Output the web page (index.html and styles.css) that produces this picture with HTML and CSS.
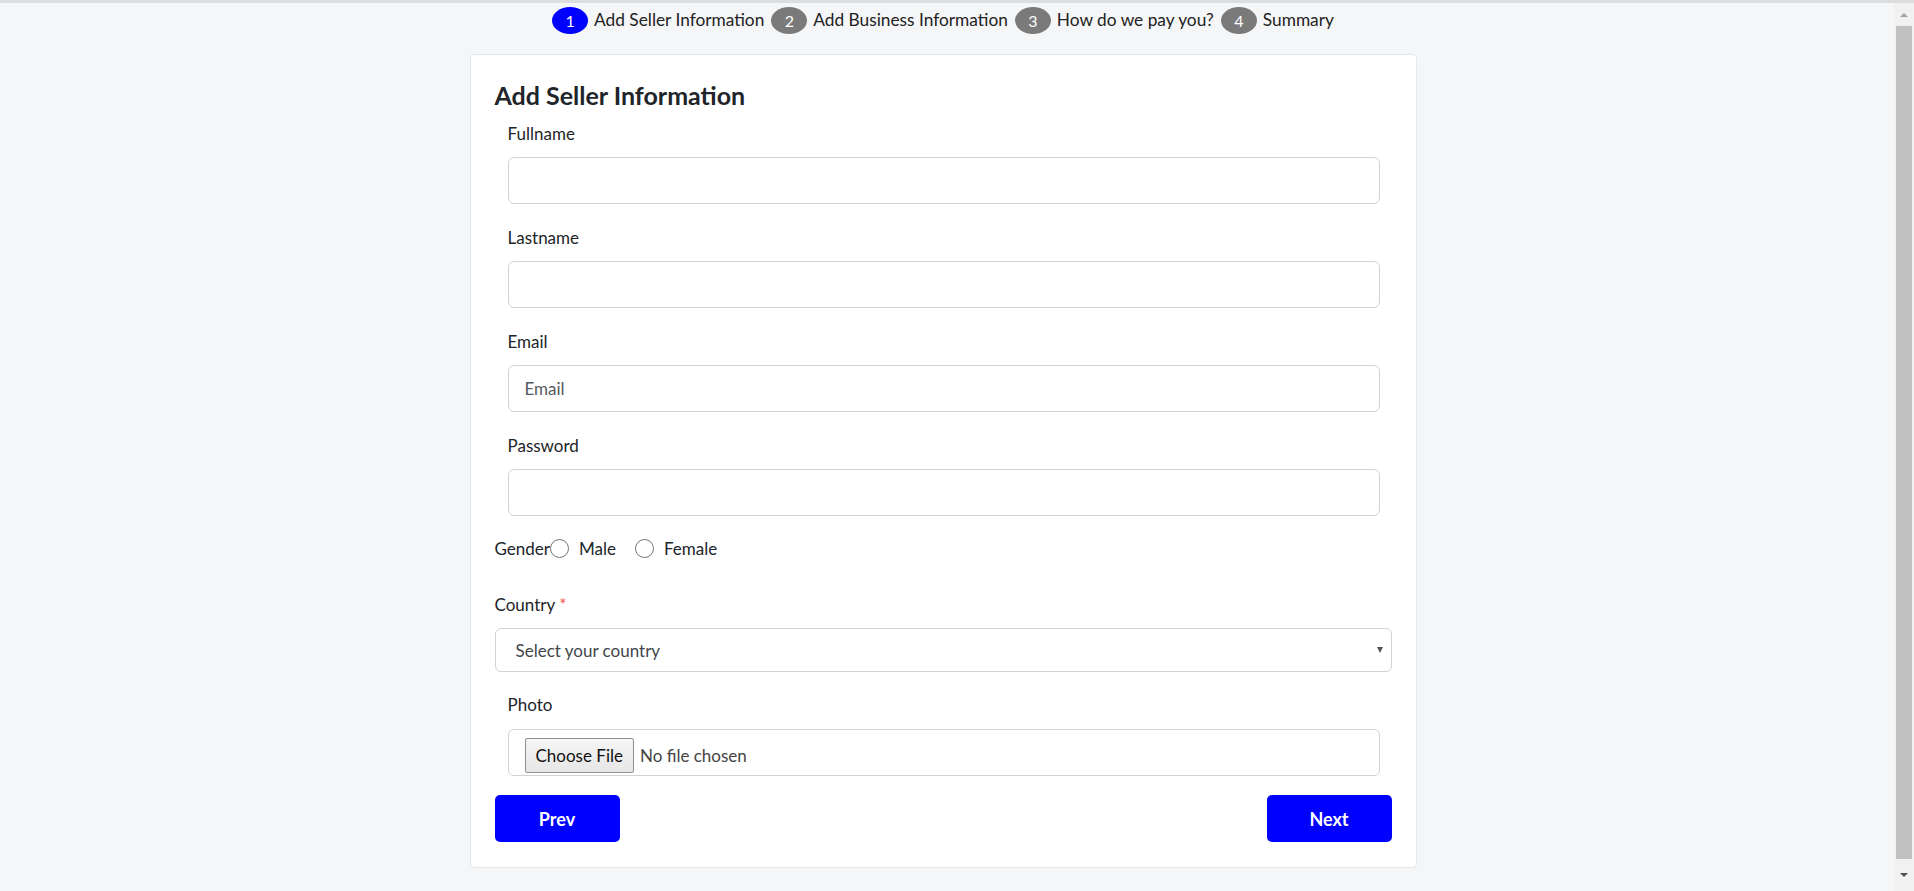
FILE: index.html
```html
<!DOCTYPE html>
<html lang="en">
<head>
<meta charset="utf-8">
<title>Add Seller Information</title>
<link rel="stylesheet" href="styles.css">
</head>
<body>
<div class="topline"></div>
<div class="frame">
  <main class="main">
    <nav class="stepper">
      <span class="step-num active">1</span><span class="step-text">Add Seller Information</span>
      <span class="step-num">2</span><span class="step-text">Add Business Information</span>
      <span class="step-num">3</span><span class="step-text">How do we pay you?</span>
      <span class="step-num">4</span><span class="step-text last">Summary</span>
    </nav>
    <form class="card">
      <h2 class="card-title">Add Seller Information</h2>
      <div class="field">
        <label class="label" for="fullname">Fullname</label>
        <input class="input" id="fullname" type="text">
      </div>
      <div class="field">
        <label class="label" for="lastname">Lastname</label>
        <input class="input" id="lastname" type="text">
      </div>
      <div class="field">
        <label class="label" for="email">Email</label>
        <input class="input" id="email" type="email" placeholder="Email">
      </div>
      <div class="field">
        <label class="label" for="password">Password</label>
        <input class="input" id="password" type="password">
      </div>
      <div class="gender-row">
        <span class="gender-title">Gender</span>
        <label class="radio-opt"><input class="radio" type="radio" name="gender"><span class="radio-text">Male</span></label>
        <label class="radio-opt second"><input class="radio" type="radio" name="gender"><span class="radio-text">Female</span></label>
      </div>
      <label class="label country-label" for="country">Country <span class="req">*</span></label>
      <div class="select-wrap">
        <select class="select" id="country">
          <option>Select your country</option>
        </select>
      </div>
      <div class="field photo-field">
        <label class="label photo-label" for="photo">Photo</label>
        <div class="file-box">
          <input class="file" id="photo" type="file">
        </div>
      </div>
      <div class="actions">
        <button class="btn" type="button">Prev</button>
        <button class="btn" type="button">Next</button>
      </div>
    </form>
  </main>
  <div class="scrollbar">
    <div class="sb-btn sb-up"><span class="arrow-up"></span></div>
    <div class="sb-thumb"></div>
    <div class="sb-btn sb-down"><span class="arrow-down"></span></div>
  </div>
</div>
</body>
</html>
```
FILE: styles.css
```css
html, body {
  margin: 0;
  padding: 0;
  height: 100%;
  overflow: hidden;
}
body {
  display: flex;
  flex-direction: column;
  background: #f5f6f8;
  font-family: Lato, "Open Sans", sans-serif;
  color: #212529;
}
.topline {
  height: 3px;
  background: #dcdddf;
  flex: none;
}
.frame {
  flex: 1;
  display: flex;
  min-height: 0;
}
.main {
  flex: 1;
  display: flex;
  flex-direction: column;
  align-items: center;
  padding-right: 8px;
}

/* stepper */
.stepper {
  display: flex;
  align-items: center;
  height: 27px;
  margin-top: 4px;
  font-size: 17.3px;
  color: #222;
}
.step-num {
  display: inline-flex;
  align-items: center;
  justify-content: center;
  width: 36px;
  height: 27px;
  border-radius: 50%;
  background: #7a7a7a;
  color: #fff;
  font-size: 16px;
}
.step-num.active {
  background: #0000ff;
}
.step-text {
  margin: 0 7px 0 6px;
  padding-bottom: 2px;
  white-space: nowrap;
}
.step-text.last {
  margin-right: 0;
}

/* card */
.card {
  box-sizing: border-box;
  width: 947px;
  margin: 20px 0 0;
  padding: 25px 24px 25px;
  background: #fff;
  border: 1px solid #e5e7ea;
  border-radius: 4px;
}
.card-title {
  margin: 0 0 11px;
  font-size: 25px;
  line-height: 30px;
  font-weight: 700;
  color: #212529;
}
.field {
  padding: 0 12px 0 13px;
  margin-bottom: 21px;
}
.label {
  display: block;
  font-size: 17px;
  line-height: 24px;
  padding-top: 1px;
  margin-bottom: 11px;
  color: #212529;
}
.input {
  display: block;
  box-sizing: border-box;
  width: 100%;
  height: 47px;
  padding: 0 16px;
  border: 1px solid #cfd3d9;
  border-radius: 6px;
  background: #fff;
  font-family: Lato, sans-serif;
  font-size: 17px;
  color: #333;
  outline: none;
}
.input::placeholder {
  color: #555a60;
}

/* gender */
.gender-row {
  display: flex;
  align-items: center;
  height: 24px;
  font-size: 17px;
  margin-top: -1px;
  margin-bottom: 32px;
}
.radio-opt {
  display: flex;
  align-items: center;
}
.radio-opt.second {
  margin-left: 19px;
}
.radio {
  appearance: none;
  -webkit-appearance: none;
  box-sizing: border-box;
  width: 19px;
  height: 19px;
  margin: 0;
  border: 1px solid #767676;
  border-radius: 50%;
  background: #fff;
}
.radio-text {
  margin-left: 10px;
}

/* country */
.country-label {
  margin-bottom: 11px;
}
.req {
  color: #f05252;
}
.select-wrap {
  position: relative;
}
.select-wrap::after {
  content: "";
  position: absolute;
  right: 9px;
  top: 19px;
  border-left: 3.5px solid transparent;
  border-right: 3.5px solid transparent;
  border-top: 6px solid #50555b;
}
.select {
  appearance: none;
  -webkit-appearance: none;
  display: block;
  box-sizing: border-box;
  width: 100%;
  height: 44px;
  padding: 0 20px;
  border: 1px solid #cfd3d9;
  border-radius: 6px;
  background: #fff;
  font-family: Lato, sans-serif;
  font-size: 17px;
  color: #41464b;
}

/* photo */
.photo-field {
  margin-top: 20px;
  margin-bottom: 19px;
}
.photo-label {
  margin-bottom: 12px;
}
.file-box {
  box-sizing: border-box;
  height: 47px;
  padding: 0 16px 2px;
  display: flex;
  align-items: flex-end;
  border: 1px solid #cfd3d9;
  border-radius: 6px;
  background: #fff;
}
.file {
  font-family: Lato, sans-serif;
  font-size: 17px;
  color: #444;
}
.file::file-selector-button {
  box-sizing: border-box;
  height: 35px;
  padding: 0 10px;
  margin-right: 6px;
  border: 1px solid #8f8f8f;
  border-radius: 2px;
  background: linear-gradient(#f6f6f6, #e6e6e6);
  font-family: Lato, sans-serif;
  font-size: 17px;
  color: #111;
}

/* actions */
.actions {
  display: flex;
  justify-content: space-between;
}
.btn {
  width: 125px;
  height: 47px;
  border: none;
  border-radius: 5px;
  background: #0000ff;
  color: #fff;
  font-family: Lato, sans-serif;
  font-size: 18px;
  font-weight: 700;
}

/* scrollbar */
.scrollbar {
  width: 20px;
  flex: none;
  display: flex;
  flex-direction: column;
  background: #f1f1f1;
}
.sb-btn {
  display: flex;
  align-items: center;
  justify-content: center;
  flex: none;
}
.sb-up {
  height: 23px;
}
.sb-down {
  height: 32px;
}
.sb-thumb {
  flex: 1;
  margin: 0 2px;
  background: #c1c1c1;
}
.arrow-up {
  width: 0;
  height: 0;
  border-left: 4px solid transparent;
  border-right: 4px solid transparent;
  border-bottom: 4px solid #a3a3a3;
}
.arrow-down {
  width: 0;
  height: 0;
  border-left: 4px solid transparent;
  border-right: 4px solid transparent;
  border-top: 4px solid #505050;
}
```
